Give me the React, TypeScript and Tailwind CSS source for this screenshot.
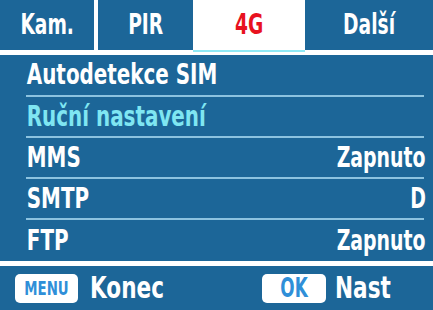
import React from "react";

const FONT = "font-['DejaVu_Sans_Condensed','DejaVu_Sans',sans-serif]";

function Row({ label, value, cyan, h, last }: { label: string; value?: string; cyan?: boolean; h: string; last?: boolean }) {
  return (
    <div className={`${h} pl-[26px] pr-[7px] flex`}>
      <div className={`flex-1 flex items-center justify-between ${last ? "" : "border-b-2 border-[#8cc3e0]"} mr-[2px]`}>
        <span className={`pl-[1px] inline-block origin-left scale-x-[0.79] ${cyan ? "text-[#7fe6f2]" : "text-white"}`}>{label}</span>
        {value && <span className="text-white -mr-[2px] inline-block origin-right scale-x-[0.75]">{value}</span>}
      </div>
    </div>
  );
}

function Tab({ w, children, active }: { w: string; children: React.ReactNode; active?: boolean }) {
  return (
    <div className={`${w} ${active ? "bg-white text-[#e8121f]" : "bg-[#1c6698] text-white"} flex items-center justify-center`}>
      <span className="inline-block scale-x-[0.74]">{children}</span>
    </div>
  );
}

export default function App() {
  return (
    <div className={`w-[433px] h-[310px] bg-white flex flex-col ${FONT} font-bold text-[28px] leading-none overflow-hidden`}>
      <div className="h-[50px] flex shrink-0">
        <Tab w="w-[94px]">Kam.</Tab>
        <div className="w-[4px] bg-white" />
        <Tab w="w-[95px]">PIR</Tab>
        <Tab w="w-[112px]" active>4G</Tab>
        <Tab w="flex-1">Další</Tab>
      </div>
      <div className="h-[5px] flex shrink-0">
        <div className="w-[193px]" />
        <div className="w-[112px] h-[2px] bg-[#8fe9f5]" />
      </div>
      <div className="h-[206px] bg-[#1c6698] flex flex-col shrink-0">
        <Row h="h-[42px]" label="Autodetekce SIM" />
        <Row h="h-[41px]" label="Ruční nastavení" cyan />
        <Row h="h-[41px]" label="MMS" value="Zapnuto" />
        <Row h="h-[41px]" label="SMTP" value="D" />
        <Row h="h-[41px]" label="FTP" value="Zapnuto" last />
      </div>
      <div className="h-[5px] shrink-0" />
      <div className="flex-1 bg-[#1c6698] flex items-center text-white text-[30px]">
        <div className="w-[262px] flex items-center">
          <div className="ml-[15px] w-[63px] h-[29px] bg-white rounded-[5px] flex items-center justify-center text-[#2f8fd8] text-[19px]">
            <span className="inline-block scale-x-[0.78]">MENU</span>
          </div>
          <span className="ml-[12px] inline-block origin-left scale-x-[0.8]">Konec</span>
        </div>
        <div className="w-[64px] h-[29px] bg-white rounded-[5px] flex items-center justify-center text-[#2f8fd8] text-[26px]">
          <span className="inline-block scale-x-[0.72]">OK</span>
        </div>
        <span className="ml-[9px] inline-block origin-left scale-x-[0.8]">Nast</span>
      </div>
    </div>
  );
}
